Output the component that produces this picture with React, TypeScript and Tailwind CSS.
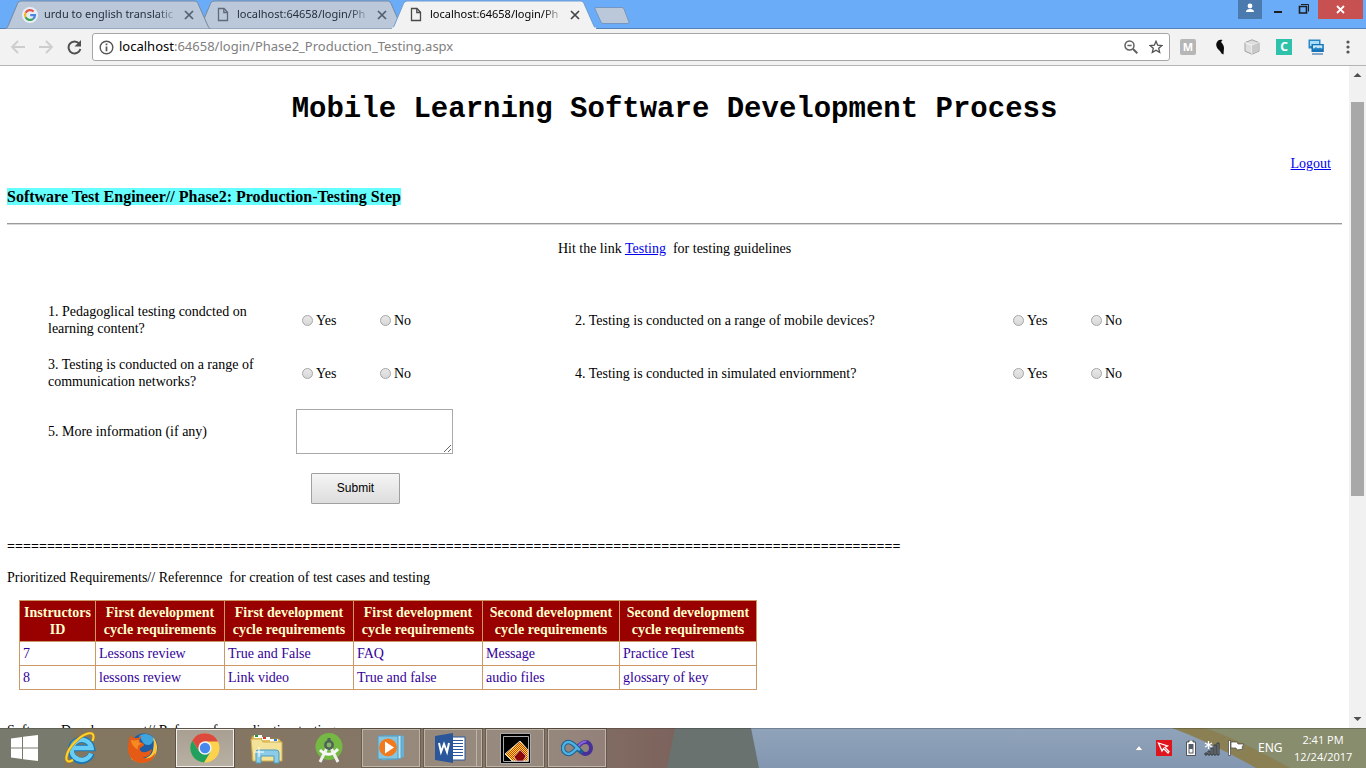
import React from "react";

const cellBorder = "border border-[#cc9966]";

function DocIcon({ dark }: { dark?: boolean }) {
  return (
    <svg width="12" height="15" viewBox="0 0 12 15" fill="none" stroke={dark ? "#4a4a4a" : "#616a78"} strokeWidth="1.3" className="shrink-0">
      <path d="M1.5 1.5h5.5l3.5 3.8v8.2h-9z" />
      <path d="M6.8 1.5v4h3.7" />
    </svg>
  );
}

function GoogleIcon() {
  return (
    <svg width="16" height="16" viewBox="0 0 16 16" fill="none" className="shrink-0" strokeWidth="2.2">
      <circle cx="8" cy="8" r="8" fill="#e9eef6" />
      <path d="M11.6 4.6A5 5 0 0 0 3.6 5.7" stroke="#e2574c" />
      <path d="M3.6 5.7a5 5 0 0 0 0 4.6" stroke="#f2b920" />
      <path d="M3.6 10.3a5 5 0 0 0 7.5 1.6" stroke="#3da457" />
      <path d="M11.1 11.9a5 5 0 0 0 1.9-3.8H8.2" stroke="#4a86e0" />
    </svg>
  );
}

function Tab({ title, icon, active, className }: { title: string; icon: React.ReactNode; active?: boolean; className: string }) {
  return (
    <div className={`relative h-[29px] w-[206px] ${className}`}>
      <svg className="absolute inset-0" width="206" height="29" viewBox="0 0 206 29">
        <path d="M0.5 29C2 28 2.5 27 3.5 25L12.5 3.5Q13.5 1 16 1H190Q192 1 193 3.5L202.5 25Q203.5 28 205.5 29z" fill={active ? "#f2f2f2" : "#bac8da"} stroke={active ? "#6d9bd2" : "#7589a5"} />
        {active && <path d="M1 28.5H205" stroke="#f2f2f2" strokeWidth="2" />}
      </svg>
      <div className="relative flex h-full items-center pl-[17px]">
        <button className="flex items-center gap-[6px]">
          <span className="flex w-4 justify-center">{icon}</span>
          <span className={`w-[134px] whitespace-nowrap text-left text-[11px] [mask-image:linear-gradient(to_right,black_84%,transparent)] ${active ? "text-black" : "text-[#27303c]"}`}>{title}</span>
        </button>
        <button aria-label="Close tab" className="ml-[6px]">
          <svg width="10" height="10" viewBox="0 0 10 10" stroke={active ? "#454545" : "#535e6f"} strokeWidth="1.7">
            <path d="M1 1l8 8M9 1L1 9" />
          </svg>
        </button>
      </div>
    </div>
  );
}

function WindowControls() {
  return (
    <div className="ml-auto flex h-[19px] items-start">
      <button aria-label="Profile" className="flex h-[19px] w-6 justify-center bg-[#4a7aae]">
        <svg width="10" height="12" viewBox="0 0 10 12" fill="#fff" className="mt-[2px]">
          <circle cx="5" cy="4" r="2.4" />
          <path d="M1 10c0-2 1.5-3 4-3s4 1 4 3z" />
        </svg>
      </button>
      <button aria-label="Minimize" className="flex h-[19px] w-8 justify-center">
        <svg width="8" height="19" viewBox="0 0 8 19"><path d="M0 11h8v2H0z" fill="#1e1e1e" /></svg>
      </button>
      <button aria-label="Restore" className="flex h-[19px] w-6 items-start pl-1">
        <svg width="12" height="19" viewBox="0 0 12 19" fill="none" stroke="#1e1e1e">
          <path d="M1.5 6.500h7v6.500h-7z" strokeWidth="1.6" />
          <path d="M3 4.5h7.5v7" />
        </svg>
      </button>
      <button aria-label="Close window" className="mr-[3px] flex h-[19px] w-[45px] items-center justify-center bg-[#c75050]">
        <svg width="9" height="9" viewBox="0 0 9 9" stroke="#fff" strokeWidth="1.8"><path d="M1 1l7 7M8 1L1 8" /></svg>
      </button>
    </div>
  );
}

function Toolbar() {
  return (
    <div className="flex h-[37px] shrink-0 items-center border-b border-[#b6b4b6] bg-[#f2f2f2]">
      <div className="flex w-[92px] items-center gap-[14px] pl-[11px]">
        <button aria-label="Back">
          <svg width="14" height="14" viewBox="0 0 14 14" fill="none" stroke="#cdcdcd" strokeWidth="1.8"><path d="M14 7H1.5M7 1L1 7l6 6" /></svg>
        </button>
        <button aria-label="Forward">
          <svg width="14" height="14" viewBox="0 0 14 14" fill="none" stroke="#cdcdcd" strokeWidth="1.8"><path d="M0 7h12.5M7 1l6 6-6 6" /></svg>
        </button>
        <button aria-label="Reload">
          <svg width="15" height="15" viewBox="0 0 15 15" fill="none" stroke="#505050" strokeWidth="2"><path d="M12.2 3.6A6 6 0 1 0 13.4 9" /><path d="M14 0v6.5H7.5z" fill="#505050" stroke="none" /></svg>
        </button>
      </div>
      <div className="flex h-7 flex-1 items-center rounded-[3px] border border-[#a6a6a6] bg-white pl-[6px] pr-[6px]">
        <svg width="15" height="15" viewBox="0 0 15 15" fill="none" stroke="#565656" strokeWidth="1.4">
          <circle cx="7.5" cy="7.5" r="6.3" /><path d="M7.5 6.5v4.7M7.5 3.6v1.6" strokeWidth="1.7" />
        </svg>
        <a href="#address" className="ml-[5px] flex-1 text-[13px] text-[#808080]"><span className="text-black">localhost</span>:64658/login/Phase2_Production_Testing.aspx</a>
        <button aria-label="Zoom" className="mr-[11px]">
          <svg width="14" height="14" viewBox="0 0 14 14" fill="none" stroke="#606060" strokeWidth="1.5"><circle cx="5.5" cy="5.5" r="4.5" /><path d="M9 9l4.3 4.3" strokeWidth="2" /><path d="M3.4 5.5h4.2" /></svg>
        </button>
        <button aria-label="Bookmark">
          <svg width="14" height="14" viewBox="0 0 14 14" fill="none" stroke="#505050" strokeWidth="1.3"><path d="M7 1.300l1.700 3.900 4.300.3-3.300 2.800 1 4.200L7 10.300l-3.700 2.200 1-4.200L1 5.500l4.300-.3z" /></svg>
        </button>
      </div>
      <div className="flex items-center gap-4 pl-[10px] pr-[10px]">
        <button className="flex size-4 items-center justify-center rounded-[2px] bg-[#b6b6b6] text-[11px] font-bold text-white">M</button>
        <button aria-label="Extension bird">
          <svg width="16" height="16" viewBox="0 0 16 16"><path d="M4.500 4C5.500 1 8 0 10.500 1L9 3c1.500 1.500 3 3.500 3 6l-.5 6.500-2-1L8 12C5.500 10 3.500 7 4.500 4z" fill="#0c0c0c" /></svg>
        </button>
        <button aria-label="Extension cube">
          <svg width="16" height="16" viewBox="0 0 16 16" stroke="#a2a2a2"><path d="M8 .8l7 2.8v8.6l-7 3-7-3V3.600z" fill="#dedede" /><path d="M1 3.600l7 2.800 7-2.800M8 6.400v8.800" fill="none" stroke="#f7f7f7" /><path d="M8 6.400l6.500-2.600v8L8 14.600z" fill="#c9c9c9" stroke="none" /></svg>
        </button>
        <button className="flex size-4 items-center justify-center bg-[#2fc2ab] text-[12px] font-bold text-white">C</button>
        <button aria-label="Extension screens">
          <svg width="16" height="16" viewBox="0 0 16 16"><path d="M.5.500h12v9H.5z" fill="#2b86c5" /><path d="M2 2h9v5H2z" fill="#a9dcf6" /><path d="M3.500 5h12.300v8H3.500z" fill="#1673b5" /><path d="M5 6.300h9.300v3.200H5z" fill="#c9eafa" /><path d="M5 10.500l3-2.500 2 1.500 2-1 2.300 2z" fill="#2687c9" /><path d="M4 15h11" stroke="#185b97" /></svg>
        </button>
        <button aria-label="Menu" className="flex w-4 justify-center">
          <svg width="4" height="14" viewBox="0 0 4 14" fill="#555"><circle cx="2" cy="2" r="1.600" /><circle cx="2" cy="7" r="1.600" /><circle cx="2" cy="12" r="1.600" /></svg>
        </button>
      </div>
    </div>
  );
}

function YesNo({ name, label }: { name: string; label: string }) {
  const radio = "size-[11px] appearance-none rounded-full border border-[#a5a5a5] bg-linear-to-b from-[#e8e8e8] to-[#d8d8d8] checked:bg-[#555]";
  return (
    <div role="radiogroup" aria-label={label} className="flex items-center pl-[6px]">
      <label className="flex w-[78px] items-center gap-[3px]"><input type="radio" name={name} className={radio} />Yes</label>
      <label className="flex items-center gap-[3px]"><input type="radio" name={name} className={radio} />No</label>
    </div>
  );
}

const headers = [
  ["Instructors", "ID"],
  ["First development", "cycle requirements"],
  ["First development", "cycle requirements"],
  ["First development", "cycle requirements"],
  ["Second development", "cycle requirements"],
  ["Second development", "cycle requirements"],
];
const rows = [
  ["7", "Lessons review", "True and False", "FAQ", "Message", "Practice Test"],
  ["8", "lessons review", "Link video", "True and false", "audio files", "glossary of key"],
];

function Page() {
  const q1 = "1. Pedagoglical testing condcted on learning content?";
  const q2 = "2. Testing is conducted on a range of mobile devices?";
  const q3 = "3. Testing is conducted on a range of communication networks?";
  const q4 = "4. Testing is conducted in simulated enviornment?";
  return (
    <main className="min-w-0 flex-1 overflow-hidden px-[7px] font-['Liberation_Serif',serif] text-[14px] leading-[17px] text-black">
      <h1 className="mt-7 text-center font-['Liberation_Mono',monospace] text-[29px] font-bold leading-8">Mobile Learning Software Development Process</h1>
      <div className="mt-[29px] pr-[11px] text-right"><a href="#logout" className="text-[#0000ee] underline">Logout</a></div>
      <h2 className="mt-4 text-[16px] font-bold leading-[18px]"><span className="bg-[#66ffff]">Software Test Engineer// Phase2: Production-Testing Step</span></h2>
      <hr className="mt-[17px] h-[2px] border-t border-b border-t-[#9a9a9a] border-b-[#d8d8d8]" />
      <p className="mt-[15px] text-center">Hit the link <a href="#testing" className="text-[#0000ee] underline">Testing</a>&nbsp; for testing guidelines</p>
      <form className="mt-[46px] grid grid-cols-[248px_279px_432px_1fr] items-center gap-y-[19px] pl-[41px]" onSubmit={(e) => e.preventDefault()}>
        <p className="pr-6">{q1}</p><YesNo name="q1" label={q1} />
        <p>{q2}</p><YesNo name="q2" label={q2} />
        <p className="pr-6">{q3}</p><YesNo name="q3" label={q3} />
        <p>{q4}</p><YesNo name="q4" label={q4} />
        <label htmlFor="more">5. More information (if any)</label>
        <textarea id="more" className="col-span-3 h-[45px] w-[157px] border border-[#a9a9a9] bg-white" />
        <button type="submit" className="col-start-2 ml-[15px] h-[31px] w-[89px] rounded-[1px] border border-[#a0a0a0] bg-linear-to-b from-[#f5f5f5] to-[#dddddd] font-['Liberation_Sans',sans-serif] text-[12px]">Submit</button>
      </form>
      <p className="mt-[34px] whitespace-nowrap font-bold">{"=".repeat(112)}</p>
      <p className="mt-[14px]">Prioritized Requirements// Referennce&nbsp; for creation of test cases and testing</p>
      <table className="ml-3 mt-[14px] border-collapse">
        <thead>
          <tr className="bg-[#990000] text-[#ffffcc]">
            {headers.map((h, i) => (
              <th key={i} className={`${cellBorder} ${i === 0 ? "w-[76px]" : i < 4 ? "w-[129px]" : "w-[137px]"} p-[3px] text-center font-bold whitespace-nowrap`}>{h[0]}<br />{h[1]}</th>
            ))}
          </tr>
        </thead>
        <tbody className="text-[#330099]">
          {rows.map((r) => (
            <tr key={r[0]}>{r.map((c, i) => <td key={i} className={`${cellBorder} p-[3px]`}>{c}</td>)}</tr>
          ))}
        </tbody>
      </table>
      <p className="mt-8">Software Developmment// Refrence for application testing</p>
    </main>
  );
}

function Scrollbar() {
  return (
    <div className="flex w-[17px] shrink-0 flex-col items-center bg-[#f1f1f1]">
      <svg width="17" height="17" viewBox="0 0 17 17"><path d="M4.500 11L8.500 7l4 4z" fill="#505050" /></svg>
      <div className="mt-[19px] h-[394px] w-[13px] bg-[#a8a8a8]" />
      <svg width="17" height="17" viewBox="0 0 17 17" className="mt-auto"><path d="M4.500 6l4 4 4-4z" fill="#505050" /></svg>
    </div>
  );
}

const IEIcon = () => (
  <svg width="32" height="34" viewBox="0 0 32 34" fill="none">
    <path d="M26.500 22.500A10.500 10.500 0 1 1 26.800 17H8" stroke="#1677b5" strokeWidth="6.500" />
    <path d="M26 22.500A10 10 0 1 1 26.500 17H8" stroke="#68cdf5" strokeWidth="4.500" />
    <path d="M8 29C-3 35 1 20 10 11S29-1 28.500 6c0 1.500-.5 2.500-1 4" stroke="#b98414" strokeWidth="3" />
    <path d="M8 29C-3 35 1 20 10 11S29-1 28.500 6c0 1.500-.5 2.500-1 4" stroke="#ffd22e" strokeWidth="2" />
  </svg>
);
const FirefoxIcon = () => (
  <svg width="32" height="32" viewBox="0 0 32 32">
    <circle cx="17" cy="15" r="13.500" fill="#1c5da5" />
    <path d="M12 4c5-4 13-2 16 4-4 1-2 5-7 5s-6-5-9-9z" fill="#3fa5de" />
    <path d="M26 5c6 7 5 16 0 21s-14 6-20 2 2-4 7-2 12-2 13-8 1-9 0-13z" fill="#fcc636" />
    <path d="M2 9c0-3 1-4 2-6 1 3 3 3 6 3 2 0 3-2 5-2-2 2-3 4-2 6 2 1 4 1 4 3-1 2-5 2-4 5 2 4 8 2 12-1-1 7-6 9-10 8 5 3 10 1 13-4 0 6-6 10-13 10C7 31 1 25 1 17c0-3 0-5 1-8z" fill="#e55b16" />
    <path d="M4 8c3 1 5 0 8 0-1 2 0 3 3 4-3 0-5 2-4 6C7 15 4 12 4 8z" fill="#f58a22" />
  </svg>
);
const ChromeIcon = () => (
  <svg width="30" height="30" viewBox="0 0 30 30">
    <circle cx="15" cy="15" r="14.500" fill="#fdd24c" />
    <path d="M2.300 7.500A14.500 14.500 0 0 1 28 8.500H15L9 18z" fill="#dc4a3e" />
    <path d="M2.300 7.500A14.500 14.500 0 0 0 14 29.500L21 18H9z" fill="#22a05e" />
    <circle cx="15" cy="15" r="6.700" fill="#f3f3f3" />
    <circle cx="15" cy="15" r="5.200" fill="#4788ee" />
  </svg>
);
const FolderIcon = () => (
  <svg width="34" height="31" viewBox="0 0 34 31">
    <path d="M2 3h9l1 3h17l2 2v19H2z" fill="#e7c45d" stroke="#b78f32" />
    <path d="M4 2h8v3H4zM12 4h8v3h-8zM20 6h8v3h-8z" fill="#fff" />
    <path d="M5 2h3v2H5z" fill="#199a3b" /><path d="M13 4h3v2h-3z" fill="#d33b2c" /><path d="M24 6h3v2h-3z" fill="#277dce" />
    <path d="M1 6h10l2 3h19v19H3z" fill="#f5e299" stroke="#d0ae4f" />
    <path d="M6 30V19q0-2 2-2h18q3 0 3 3v10h-5v-7H11v7z" fill="#8dcce8" stroke="#4c9dbc" />
    <path d="M9 14v10M4 19h10" stroke="#fff" />
  </svg>
);
const AndroidIcon = () => (
  <svg width="28" height="31" viewBox="0 0 28 31" fill="none">
    <circle cx="14" cy="13.500" r="13.500" fill="#75b843" />
    <path d="M12.500 14L5 29M15.500 14L23 29" stroke="#eef1ed" strokeWidth="3" />
    <path d="M5 17q9 9 18-1" stroke="#f6f6f6" strokeWidth="3" />
    <path d="M14 5v5" stroke="#51615c" strokeWidth="3" />
    <circle cx="14" cy="12" r="3.700" stroke="#51615c" strokeWidth="2.500" fill="#83b760" />
  </svg>
);
const MediaIcon = () => (
  <svg width="28" height="26" viewBox="0 0 28 26">
    <path d="M8 0l19 1v21l-19 3z" fill="#6ab0d2" /><path d="M5 1l19-.5v23L5 25z" fill="#b9e4f5" stroke="#5ba6cc" /><path d="M1 1h20v23H1z" fill="#86c5df" stroke="#559bbd" />
    <circle cx="11" cy="12.500" r="9" fill="#f17a1f" /><path d="M8 6.500v12l9-6z" fill="#fff" />
  </svg>
);
const WordIcon = () => (
  <svg width="32" height="30" viewBox="0 0 32 30">
    <path d="M15 4h15v23H15z" fill="#fff" stroke="#2b579a" /><path d="M18 7.500h10M18 10.500h10M18 13.500h10M18 16.500h10M18 19.500h10M18 22.500h10" stroke="#2b579a" />
    <path d="M0 3l18-3v30L0 27z" fill="#2b579a" /><path d="M4 10l2 9 3-8 3 8 2-9" fill="none" stroke="#fff" strokeWidth="2" />
  </svg>
);
const PixelIcon = () => (
  <svg width="31" height="31" viewBox="0 0 31 31">
    <defs><pattern id="dots" width="2" height="2" patternUnits="userSpaceOnUse"><rect width="2" height="2" fill="#ffec18" /><rect width="1" height="1" fill="#e02b12" /><rect x="1" y="1" width="1" height="1" fill="#e02b12" /></pattern></defs>
    <path d="M.5.500h30v30H.5z" fill="#000" stroke="#aaa" /><path d="M3.500 3.500h25v25h-25z" fill="none" stroke="#aaa" />
    <path d="M20 8l8 9v11H12l-7-7z" fill="url(#dots)" stroke="#d8d8d8" /><path d="M20 17l6 6-3 5h-6l-3-4z" fill="#8b0808" stroke="#c8a0a0" />
  </svg>
);
const StudioIcon = () => (
  <svg width="32" height="18" viewBox="0 0 32 18" fill="none" strokeLinecap="round">
    <path d="M16 9C19 5 21 3 24.500 3a5.500 6 0 0 1 0 12C21 15 19 12 16 9" stroke="#47309a" strokeWidth="4" />
    <path d="M16 9C19 5 21 2.500 24.500 2.500" stroke="#8a62da" strokeWidth="2" />
    <path d="M20 12.500C15 8 12 3 7.500 3a5.500 6 0 0 0 0 12C11 15 13 12 16 9" stroke="#1c5f90" strokeWidth="4.500" />
    <path d="M18 10.500C14 6 11 3 7.500 3a5.500 6 0 0 0 0 12C11 15 13 12 16 9" stroke="#4eb3e2" strokeWidth="2.500" />
  </svg>
);

const apps = [
  { name: "Internet Explorer", icon: <IEIcon />, state: "idle" },
  { name: "Firefox", icon: <FirefoxIcon />, state: "idle" },
  { name: "Chrome", icon: <ChromeIcon />, state: "active" },
  { name: "File Explorer", icon: <FolderIcon />, state: "idle" },
  { name: "Android Studio", icon: <AndroidIcon />, state: "idle" },
  { name: "Media Player", icon: <MediaIcon />, state: "open" },
  { name: "Word", icon: <WordIcon />, state: "stacked" },
  { name: "Drawing", icon: <PixelIcon />, state: "open" },
  { name: "Visual Studio", icon: <StudioIcon />, state: "open" },
];

function Taskbar() {
  return (
    <footer className="relative h-10 shrink-0 text-white">
      <svg className="absolute inset-0 size-full" viewBox="0 0 1366 40" preserveAspectRatio="none">
        <defs>
          <linearGradient id="brown"><stop offset="0" stopColor="#83775f" /><stop offset="0.780" stopColor="#857568" /><stop offset="1" stopColor="#7c625c" /></linearGradient>
          <linearGradient id="blue" x2="0" y2="1"><stop offset="0" stopColor="#8fa3ba" /><stop offset="1" stopColor="#8497b1" /></linearGradient>
        </defs>
        <path d="M0 0h1366v40H0z" fill="url(#blue)" />
        <path d="M0 0h680v40H0z" fill="url(#brown)" />
        <path d="M0 0h75L63 40H0z" fill="#777a6c" />
        <path d="M675 0h76l8 40h-92z" fill="#69726f" />
        <path d="M1172 0h194v40h-110Q1210 14 1172 0z" fill="#8b8054" />
        <path d="M1205 0h161v40h-76Q1245 14 1205 0z" fill="#888d6d" />
        <path d="M0 .5h1366" stroke="#000" strokeOpacity="0.200" />
      </svg>
      <div className="relative flex h-full items-center">
        <button aria-label="Start" className="mr-1 flex w-12 justify-center">
          <svg width="27" height="26" viewBox="0 0 27 26" fill="#fff"><path d="M0 3.500l11-1.500v10.500H0zM12 1.800L27 0v12.500H12zM0 13.500h11V24L0 22.500zM12 13.500h15V26l-15-1.800z" /></svg>
        </button>
        <nav className="flex h-full items-center gap-1">
          {apps.map((a) => (
            <button
              key={a.name}
              aria-label={a.name}
              className={`flex h-[38px] w-[58px] items-center justify-center ${
                a.state === "active" ? "border border-[#f1efec] bg-linear-to-b from-[#a89f92] to-[#b8b0a2] outline outline-[#5b5347]" : a.state === "idle" ? "" : "border border-[#bdb5a6] bg-white/15 outline outline-black/20"
              }`}
            >
              {a.state === "stacked" ? (
                <span className="flex h-full w-full items-center"><span className="flex h-full flex-1 items-center justify-center border-r border-[#bdb5a6]">{a.icon}</span><span className="w-1" /></span>
              ) : a.icon}
            </button>
          ))}
        </nav>
        <div className="ml-auto flex h-full items-center pr-[14px]">
          <button aria-label="Show hidden icons" className="mr-[13px]"><svg width="8" height="6" viewBox="0 0 8 6"><path d="M0 5.500L4 .5l4 5z" fill="#fff" stroke="#67727e" strokeWidth="0.500" /></svg></button>
          <svg width="16" height="16" viewBox="0 0 16 16" className="mr-[14px]"><path d="M0 0h16v16H0z" fill="#df141d" /><path d="M2.500 3l9 3-2.500 1.500 4 4-1 1.500-4.500-4.500L6 11z" fill="none" stroke="#fff" strokeWidth="1.300" /></svg>
          <svg width="10" height="16" viewBox="0 0 10 16" className="mr-2"><path d="M3 0h4v2h2.500v13.500h-9V2H3z" fill="#fff" stroke="#333" strokeWidth="0.800" /><path d="M2.500 4h5v9.500h-5z" fill="#555c66" /><path d="M3.500 9h3v3.500h-3z" fill="#fff" /></svg>
          <svg width="16" height="15" viewBox="0 0 16 15" className="mr-2"><path d="M1 12h2v2H1zM4 10h2v4H4zM7 7h2v7H7zM10 4h2v10h-2zM13 2h2v12h-2z" fill="#888" stroke="#33393f" strokeWidth="1" /><path d="M4.500 0v8M1 2l7 4M8 2L1 6" stroke="#fff" strokeWidth="1.300" /></svg>
          <svg width="17" height="16" viewBox="0 0 17 16" className="mr-[13px]"><path d="M.5.500h2v15h-2z" fill="#fff" stroke="#444" strokeWidth="0.700" /><path d="M3 2h6l1 2h6l-2 3 1 2-6 1-1-2H3z" fill="#fff" stroke="#444" strokeWidth="0.700" /></svg>
          <span className="w-[36px] text-[12px]">ENG</span>
          <time className="w-[58px] whitespace-nowrap text-center font-['Open_Sans',sans-serif] text-[11px] leading-[17px]">2:41 PM<br />12/24/2017</time>
        </div>
      </div>
    </footer>
  );
}

export default function App() {
  return (
    <div className="flex h-screen flex-col overflow-hidden bg-white font-['Noto_Sans','Open_Sans',sans-serif]">
      <header className="flex h-[29px] shrink-0 border-b border-[#5580b8] bg-[#6aacf8] pl-[5px]">
        <Tab title="urdu to english translatic" icon={<GoogleIcon />} className="z-10" />
        <Tab title="localhost:64658/login/Ph" icon={<DocIcon />} className="-ml-[13px]" />
        <Tab title="localhost:64658/login/Ph" icon={<DocIcon dark />} active className="z-20 -ml-[13px]" />
        <button aria-label="New tab" className="-ml-[3px] mt-[7px] h-4">
          <svg width="36" height="17" viewBox="0 0 36 17"><path d="M2 .5h26q1.500 0 2 1.500l5 13q.5 1.500-1 1.500H9q-1.500 0-2-1.500L1 2Q.5.500 2 .5z" fill="#bac8da" stroke="#7397c2" /></svg>
        </button>
        <WindowControls />
      </header>
      <Toolbar />
      <div className="flex min-h-0 flex-1">
        <Page />
        <Scrollbar />
      </div>
      <Taskbar />
    </div>
  );
}
